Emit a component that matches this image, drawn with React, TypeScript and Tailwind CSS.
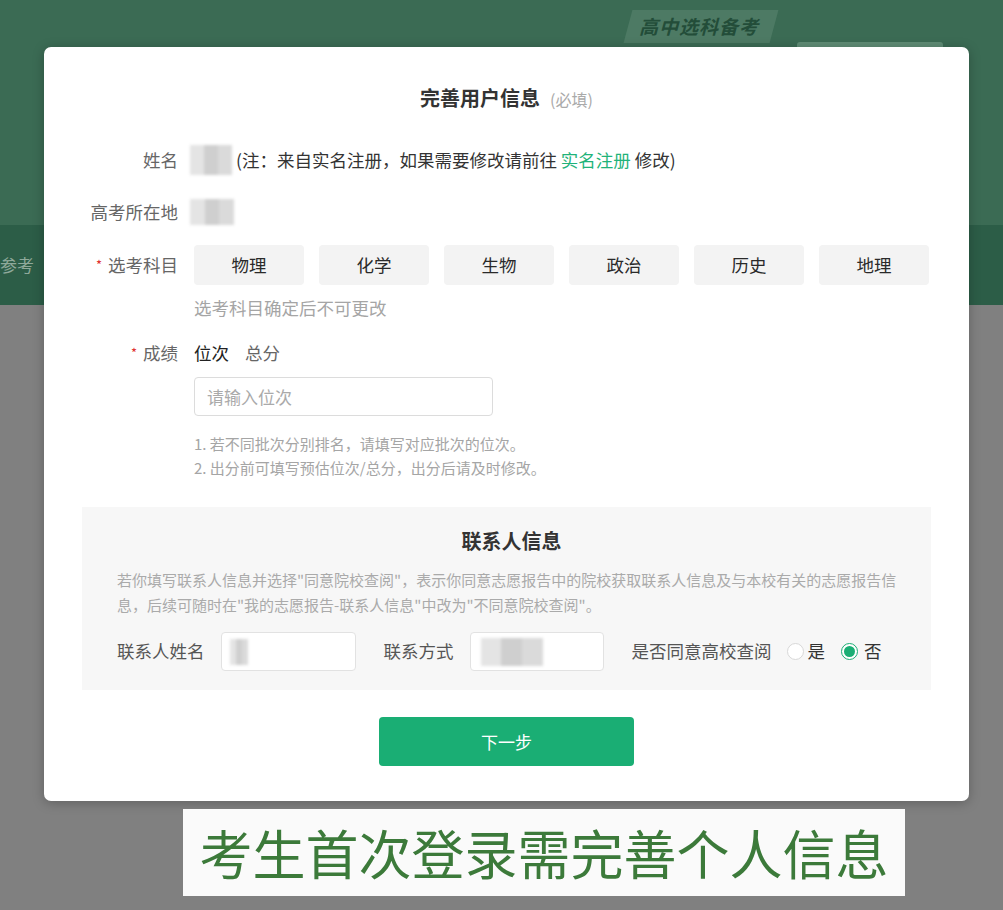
import { useState } from "react";

const SUBJECTS = ["物理", "化学", "生物", "政治", "历史", "地理"];

const font = { fontFamily: '"Noto Sans CJK SC", "Noto Sans", sans-serif' };

// masked personal data (name, region, phone) rendered as a soft mosaic
function Masked({ w, h, className = "" }: { w: string; h: string; className?: string }) {
  return (
    <div className={`flex blur-[1.5px] ${w} ${h} ${className}`}>
      <div className="flex-1 bg-[#e4e4e4]" />
      <div className="flex-1 bg-[#cfcfcf]" />
      <div className="flex-1 bg-[#dadada]" />
    </div>
  );
}

function Required() {
  return <span className="mr-[6px] text-[13px] text-[#e03030]">*</span>;
}

export default function App() {
  const [subjects, setSubjects] = useState<string[]>([]);
  const [tab, setTab] = useState<"rank" | "score">("rank");
  const [agree, setAgree] = useState(false);

  const toggle = (s: string) =>
    setSubjects(prev => (prev.includes(s) ? prev.filter(x => x !== s) : [...prev, s]));

  return (
    <div className="relative h-[910px] w-[1003px] overflow-hidden" style={font}>
      {/* page behind the dialog */}
      <div className="flex h-full flex-col">
        <div className="relative h-[225px] bg-[#3b6b54]">
          <div className="absolute left-[628px] top-[10px] flex h-[33px] w-[146px] -skew-x-[15deg] items-center justify-center bg-[#4d7a64]">
            <span className="text-[19px] font-bold tracking-[1px] text-[#234d39]">高中选科备考</span>
          </div>
          <div className="absolute left-[797px] top-[42px] h-[8px] w-[146px] rounded-t-[3px] bg-[#5f8c75]" />
        </div>
        <div className="flex h-[80px] items-center bg-[#2c5d47]">
          <span className="text-[17px] text-[#8fa99b]">参考</span>
        </div>
        <div className="flex-1 bg-[#808080]" />
      </div>

      {/* dialog */}
      <div className="absolute left-[44px] top-[47px] flex h-[754px] w-[925px] flex-col rounded-[7px] bg-white pt-[37px] shadow-[0_2px_12px_rgba(0,0,0,0.25)]">
        <div className="flex h-[28px] items-center justify-center">
          <span className="text-[20px] font-bold text-[#333]">完善用户信息</span>
          <span className="ml-[10px] mt-[2px] text-[16px] text-[#aaa]">(必填)</span>
        </div>

        <div className="mt-[33px] flex h-[30px] items-center text-[17.5px]">
          <div className="w-[134px] text-right text-[#666]">姓名</div>
          <div className="ml-[12px] flex items-center">
            <Masked w="w-[42px]" h="h-[30px]" className="rounded-[10px]" />
            <span className="ml-[4px] text-[#333]">
              (注：来自实名注册，如果需要修改请前往 <span className="text-[#1fb37a]">实名注册</span> 修改)
            </span>
          </div>
        </div>

        <div className="mt-[22px] flex h-[30px] items-center text-[17.5px]">
          <div className="w-[134px] text-right text-[#666]">高考所在地</div>
          <Masked w="w-[44px]" h="h-[26px]" className="ml-[12px] rounded-[8px]" />
        </div>

        <div className="mt-[18px] flex h-[40px] items-center text-[17.5px]">
          <div className="flex w-[134px] items-center justify-end text-[#666]">
            <Required />
            选考科目
          </div>
          <div className="ml-[16px] flex gap-[15px]">
            {SUBJECTS.map(s => (
              <button
                key={s}
                onClick={() => toggle(s)}
                className={`h-[40px] w-[110px] rounded-[4px] text-[17.5px] ${
                  subjects.includes(s) ? "bg-[#1aae74] text-white" : "bg-[#f3f3f3] text-[#2a2a2a]"
                }`}
              >
                {s}
              </button>
            ))}
          </div>
        </div>

        <div className="ml-[150px] mt-[11px] h-[24px] text-[17.5px] leading-[24px] text-[#a5a5a5]">
          选考科目确定后不可更改
        </div>

        <div className="mt-[20px] flex h-[26px] items-center text-[17.5px]">
          <div className="flex w-[134px] items-center justify-end text-[#666]">
            <Required />
            成绩
          </div>
          <div className="ml-[16px] flex gap-[16px]">
            <button onClick={() => setTab("rank")} className={tab === "rank" ? "text-[#222]" : "text-[#666]"}>
              位次
            </button>
            <button onClick={() => setTab("score")} className={tab === "score" ? "text-[#222]" : "text-[#666]"}>
              总分
            </button>
          </div>
        </div>

        <input
          placeholder={tab === "rank" ? "请输入位次" : "请输入总分"}
          className="ml-[150px] mt-[11px] h-[39px] w-[299px] rounded-[4px] border border-[#dcdcdc] px-[12px] text-[17px] text-[#333] outline-none placeholder:text-[#aaa]"
        />

        <div className="ml-[150px] mt-[16px] text-[15px] leading-[24px] text-[#a5a5a5]">
          <div>1. 若不同批次分别排名，请填写对应批次的位次。</div>
          <div>2. 出分前可填写预估位次/总分，出分后请及时修改。</div>
        </div>

        {/* contact person panel */}
        <div className="mx-[38px] mt-[27px] flex h-[183px] flex-col bg-[#f7f7f7] pl-[35px] pr-[25px] pt-[20px]">
          <div className="h-[28px] text-center text-[20px] font-bold leading-[28px] text-[#333]">联系人信息</div>
          <p className="mt-[12px] text-[15px] leading-[25px] text-[#aaa]">
            若你填写联系人信息并选择"同意院校查阅"，表示你同意志愿报告中的院校获取联系人信息及与本校有关的志愿报告信
            <br />
            息，后续可随时在"我的志愿报告-联系人信息"中改为"不同意院校查阅"。
          </p>
          <div className="mt-[15px] flex h-[39px] items-center text-[17.5px] text-[#555]">
            <span>联系人姓名</span>
            <div className="ml-[16px] flex h-[39px] w-[135px] items-center rounded-[4px] border border-[#e2e2e2] bg-white pl-[8px]">
              <Masked w="w-[18px]" h="h-[26px]" />
            </div>
            <span className="ml-[28px]">联系方式</span>
            <div className="ml-[16px] flex h-[39px] w-[134px] items-center rounded-[4px] border border-[#e2e2e2] bg-white pl-[10px]">
              <Masked w="w-[62px]" h="h-[28px]" />
            </div>
            <span className="ml-[28px]">是否同意高校查阅</span>
            <button onClick={() => setAgree(true)} className="ml-[15px] flex items-center">
              <span
                className={`flex h-[17px] w-[17px] items-center justify-center rounded-full border ${
                  agree ? "border-[#1aae74]" : "border-[#d8d8d8] bg-white"
                }`}
              >
                {agree && <span className="h-[11px] w-[11px] rounded-full bg-[#1aae74]" />}
              </span>
              <span className="ml-[4px] text-[#333]">是</span>
            </button>
            <button onClick={() => setAgree(false)} className="ml-[16px] flex items-center">
              <span
                className={`flex h-[17px] w-[17px] items-center justify-center rounded-full border ${
                  !agree ? "border-[#1aae74] bg-white" : "border-[#d8d8d8] bg-white"
                }`}
              >
                {!agree && <span className="h-[11px] w-[11px] rounded-full bg-[#1aae74]" />}
              </span>
              <span className="ml-[6px] text-[#333]">否</span>
            </button>
          </div>
        </div>

        <button className="mx-auto mt-[27px] h-[49px] w-[255px] rounded-[4px] bg-[#1aae74] text-[17px] text-white">
          下一步
        </button>
      </div>

      {/* subtitle box */}
      <div className="absolute left-[183px] top-[809px] flex h-[87px] w-[722px] items-center justify-center bg-[#fafafa]">
        <span className="text-[53px] leading-none text-[#3c7a3a]">考生首次登录需完善个人信息</span>
      </div>
    </div>
  );
}
